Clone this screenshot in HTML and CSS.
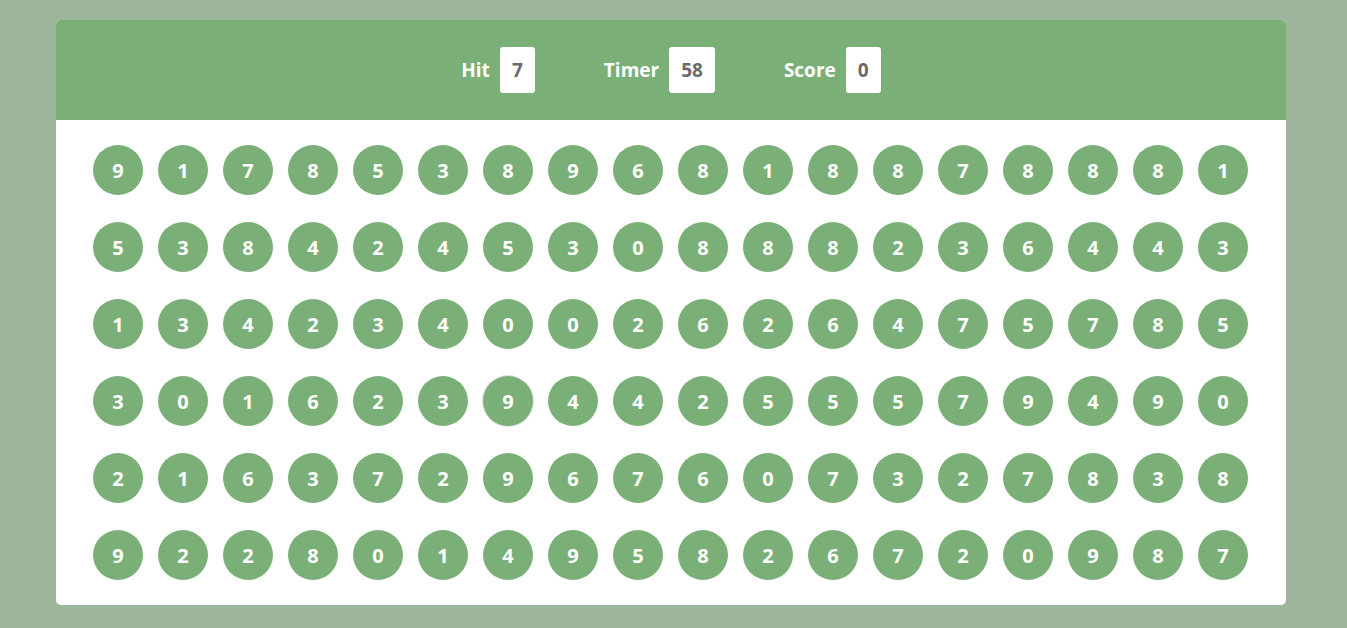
FILE: index.html
```html
<!DOCTYPE html>
<html>
<head>
    <title>Bubble Game</title>
    <meta charset="UTF-8"/>
    <link rel="stylesheet" href="styles.css">
</head>
<body>
    <div class="panel">
        <div class="top">
            <div class="elem"><span class="label">Hit</span><div class="box" id="hitval">7</div></div>
            <div class="elem"><span class="label">Timer</span><div class="box" id="timerval">58</div></div>
            <div class="elem"><span class="label">Score</span><div class="box" id="scoreval">0</div></div>
        </div>
        <div class="bottom" id="pbtm"></div>
    </div>
    <script>
        var rows = [
            "917853896818878881",
            "538424530888236443",
            "134234002626475785",
            "301623944255579490",
            "216372967607327838",
            "922801495826720987"
        ];
        var clutter = "";
        rows.forEach(function (row, r) {
            row.split("").forEach(function (n, c) {
                var cls = (r == 3 && c == 6) ? "bubble hover" : "bubble";
                clutter += '<div class="' + cls + '">' + n + '</div>';
            });
        });
        document.getElementById("pbtm").innerHTML = clutter;
    </script>
</body>
</html>
```
FILE: styles.css
```css
* {
    margin: 0;
    padding: 0;
    box-sizing: border-box;
}
html, body {
    height: 100%;
}
body {
    background: #9cb59b;
    font-family: "Open Sans", "Segoe UI", sans-serif;
    padding-top: 20px;
}
.panel {
    width: 1230px;
    margin-left: 56px;
    background: #fff;
    border-radius: 5px;
    overflow: hidden;
}
.top {
    height: 100px;
    background: #7ab077;
    display: flex;
    justify-content: center;
    align-items: center;
    gap: 69px;
}
.elem {
    display: flex;
    align-items: center;
    gap: 10px;
}
.label {
    color: #fff;
    font-weight: 700;
    font-size: 19px;
}
.box {
    background: #fff;
    color: #6b6b6b;
    font-weight: 700;
    font-size: 19px;
    line-height: 22px;
    padding: 12px 12px;
    border-radius: 3px;
    min-width: 35px;
    text-align: center;
}
.bottom {
    display: flex;
    flex-wrap: wrap;
    gap: 27px 15px;
    padding: 25px 38px 25px 37px;
}
.bubble {
    width: 50px;
    height: 50px;
    border-radius: 50%;
    background: #7ab077;
    color: #fff;
    font-weight: 700;
    font-size: 20px;
    display: flex;
    align-items: center;
    justify-content: center;
}
.bubble.hover {
    box-shadow: 0 0 0 1px rgba(0, 0, 0, 0.12);
}
```
